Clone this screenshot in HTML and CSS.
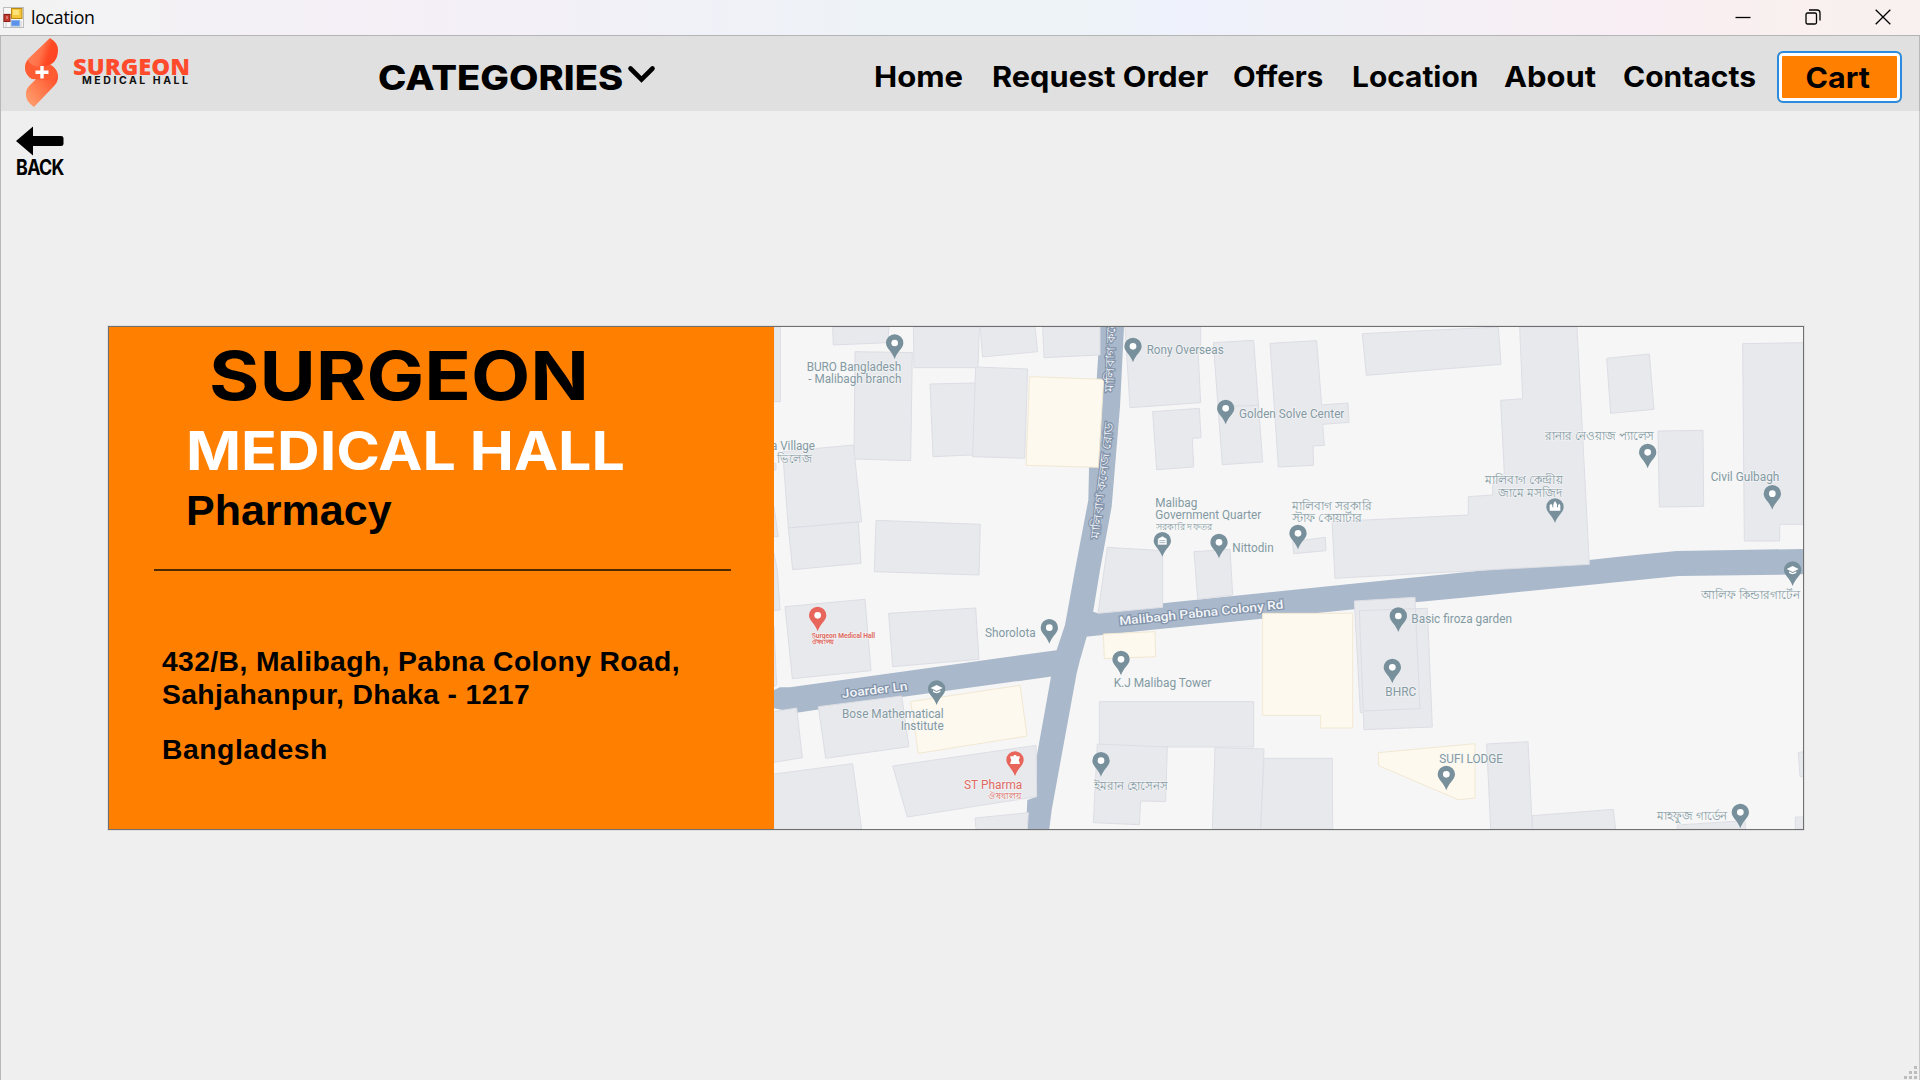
FILE: index.html
```html
<!DOCTYPE html>
<html lang="en">
<head>
<meta charset="utf-8">
<title>location</title>
<link rel="stylesheet" href="styles.css">
</head>
<body>
<div class="window">
  <div class="titlebar">
    <svg class="app-icon" width="21" height="21" viewBox="0 0 21 21">
      <rect x=".5" y=".5" width="20" height="20" fill="#f7f7f7" stroke="#bcbcbc"/>
      <path d="M.5 7H8M8 14.500V20M3 14V20M18 14V20" stroke="#ccc" fill="none"/>
      <rect x="8.500" y="1.500" width="10.500" height="10" fill="#f5c63c" stroke="#b98a12"/>
      <rect x="10" y="3" width="6" height="5" fill="#ffe27a"/>
      <rect x="1" y="7.500" width="6" height="7" fill="#c33a2c" stroke="#8e1f18"/>
      <path d="M4 9v3" stroke="#f3b0a8"/>
      <rect x="8.500" y="13.500" width="8" height="5.500" fill="#5b93ea" stroke="#8db0e6"/>
    </svg>
    <span class="title">location</span>
    <div class="controls">
      <svg width="16" height="16" viewBox="0 0 16 16"><path d="M.5 8.500h15"/></svg>
      <svg width="16" height="16" viewBox="0 0 16 16"><rect x="1" y="4" width="10.500" height="11" rx="1.500"/><path d="M4 1H12Q15 1 15 4V11.500"/></svg>
      <svg width="16" height="16" viewBox="0 0 16 16"><path d="M.7.700l14.600 14.600M15.300.700L.7 15.300"/></svg>
    </div>
  </div>

  <header class="header">
    <svg class="logo" width="170" height="75" viewBox="20 36 170 75">
      <defs>
        <linearGradient id="flameTop" x1="0" y1="0" x2="1" y2=".4"><stop offset="0" stop-color="#ff8e62"/><stop offset=".55" stop-color="#ff7048"/><stop offset=".75" stop-color="#ff4a24"/><stop offset="1" stop-color="#ff4422"/></linearGradient>
        <linearGradient id="flameLow" x1="0" y1="1" x2="1" y2="0"><stop offset="0" stop-color="#ffa574"/><stop offset=".5" stop-color="#ff7448"/><stop offset="1" stop-color="#ff3c1c"/></linearGradient>
      </defs>
      <path d="M50 38Q58 43 58 50Q58 57 54 62L50 65L32 79Q25 75 25 67Q25 62 29 58Z" fill="url(#flameTop)"/>
      <path d="M51 65Q58 70 58 77Q58 82 54 86L34 107Q25 101 26 93Q26 89 30 85L40 75Z" fill="url(#flameLow)"/>
      <path d="M28 60Q30 66 40 67L50 65Q57 68 58 76Q53 82 45 80L32 79Q25 75 25 67Q25 63 28 60Z" fill="#ff5c34"/>
      <path d="M42 66v12.500M35.500 72.200h13" stroke="#fff" stroke-width="3.400"/>
      <text class="logo-name" x="73" y="75" textLength="117" lengthAdjust="spacingAndGlyphs">SURGEON</text>
      <text class="logo-sub" x="82" y="84" textLength="106">MEDICAL HALL</text>
    </svg>
    <div class="categories"><span>CATEGORIES</span>
      <svg width="30" height="20" viewBox="0 0 30 20"><path d="M3.500 3.500L14.500 14.500L25.500 3.500"/></svg>
    </div>
    <nav class="nav">
      <a class="home">Home</a><a class="request">Request Order</a><a class="offers">Offers</a><a class="place">Location</a><a class="about">About</a><a class="contacts">Contacts</a>
    </nav>
    <button class="cart"><span>Cart</span></button>
  </header>

  <main class="main">
    <a class="back">
      <svg width="48" height="30" viewBox="0 0 48 30"><path d="M0 15L17 0.500V10H45Q47.500 10 47.500 12V18Q47.500 20 45 20H17V29.500Z"/></svg>
      <span>BACK</span>
    </a>
    <section class="card">
      <div class="info">
        <h1><span>SURGEON</span></h1>
        <h2><span>MEDICAL HALL</span></h2>
        <h3>Pharmacy</h3>
        <hr>
        <p class="street">432/B, Malibagh, Pabna Colony Road,<br>Sahjahanpur, Dhaka - 1217</p>
        <p class="country">Bangladesh</p>
      </div>
      <svg class="map" viewBox="12 21 3087 1506" preserveAspectRatio="none">
        <defs>
          <path id="drop" d="M0-26A26 26 0 0 1 26 0C26 16 7 26 0 48C-7 26-26 16-26 0A26 26 0 0 1 0-26Z"/>
          <g id="pin"><use href="#drop"/><circle r="10" fill="#fff"/></g>
          <g id="school"><use href="#drop"/><path d="M-18-3L0-12L18-3L0 6ZM-11 4L0 9L11 4V9Q0 16-11 9Z" fill="#fff"/></g>
        </defs>
        <rect x="12" y="21" width="3087" height="1506" fill="#f6f6f6"/>
        <g class="road">
          <path d="M990 21L980 180L957 445L955 540L915 750L885 915L860 990L843 1070L800 1310V1430L772 1440L768 1527H838L845 1470L920 1060L930 1020L950 950L970 872L990 750L1025 560L1050 260L1062 21Z"/>
          <path d="M960 872L984 880L1178 850L1740 792L2070 758L2458 720Q2600 704 2720 693L3099 687V763L2725 768L2070 834L1935 847L1753 868L1140 930L940 951Z"/>
          <path d="M12 1110L30 1102L60 1102L395 1055L870 989L850 1069L400 1130L80 1178L12 1165Z"/>
        </g>
        <g class="building">
          <path d="M12 21H31V245H12Z"/>
          <path d="M188 21H357L353 68L190 75Z"/>
          <path d="M255 95L427 98L422 422L252 417Z"/>
          <path d="M430 21H628L624 143H432Z"/>
          <path d="M630 21H795L803 95L638 111Z"/>
          <path d="M818 21H990V105L822 113Z"/>
          <path d="M480 192L615 189L627 404L489 410Z"/>
          <path d="M617 141L773 147L764 415L608 410Z"/>
          <path d="M38 395L250 375L275 605L55 624Z"/>
          <path d="M55 624L265 606L273 730L68 749Z"/>
          <path d="M12 430H18V450H12ZM12 560L25 650H12ZM12 700L22 750L30 870L12 872ZM12 920L20 1095L12 1100Z"/>
          <path d="M318 601L631 613L627 765L313 755Z"/>
          <path d="M1065 21H1292V75L1284 90L1292 248L1080 263Z"/>
          <path d="M1148 275L1288 265L1293 353L1267 355L1271 441L1160 449Z"/>
          <path d="M1330 68L1451 61L1478 426L1357 434ZM1345 260L1465 256"/>
          <path d="M1500 70L1640 62L1655 255L1734 249L1737 307L1658 313L1663 376L1629 378L1631 436L1525 441Z"/>
          <path d="M1777 41L2185 21L2193 133L1789 166Z"/>
          <path d="M1568 665L1666 652L1668 692L1571 701Z"/>
          <path d="M1272 695L1380 688L1388 825L1283 838Z"/>
          <path d="M1012 682L1178 692V862L984 880Z"/>
          <path d="M2249 21H2421L2458 733L1695 775L1686 605L2095 585V530L2168 525V490L2203 460L2192 241L2258 236Z"/>
          <path d="M2510 115L2638 102L2652 268L2522 280Z"/>
          <path d="M2664 333L2799 331L2801 559L2668 561Z"/>
          <path d="M2918 71L3100 68V613H3029V663H2923Z"/>
          <path d="M45 860L285 838L303 1052L67 1076Z"/>
          <path d="M356 880L617 864L627 1018L368 1040Z"/>
          <path d="M12 1175L80 1164L97 1313L12 1327Z"/>
          <path d="M145 1160L395 1128L417 1280L167 1315Z"/>
          <path d="M12 1362L248 1331L275 1527H12Z"/>
          <path d="M368 1338L798 1276L800 1430L412 1491Z"/>
          <path d="M615 1494L775 1478L772 1527H618Z"/>
          <path d="M988 1145H1451V1281H988Z"/>
          <path d="M982 1272L1192 1281L1187 1445L1112 1443L1108 1514L970 1508Z"/>
          <path d="M1335 1283L1482 1287L1472 1527H1327Z"/>
          <path d="M1482 1315H1687L1688 1527H1472Z"/>
          <path d="M1753 843L1935 832L1936 866L1972 865L1987 1221L1782 1229L1780 1178H1771Z"/>
          <path d="M1768 872L1936 866L1950 1166L1780 1173Z"/>
          <path d="M2150 1272L2274 1265L2287 1527H2162Z"/>
          <path d="M2287 1487L2530 1468L2537 1527H2288Z"/>
          <path d="M2722 1515L2925 1502L2927 1527H2722Z"/>
          <path d="M3085 1298L3100 1295V1370H3090ZM3076 1491H3100V1527H3076Z"/>
        </g>
        <g class="yard">
          <path d="M779 170L1001 178L985 442L768 436Z"/>
          <path d="M422 1145L750 1096L771 1248L445 1300Z"/>
          <path d="M1000 942L1155 935L1157 1010L1003 1016Z"/>
          <path d="M1478 880H1748V1224H1652V1186H1478Z"/>
          <path d="M1825 1298L2115 1271V1434L2065 1439L1826 1337Z"/>
        </g>
        <g class="street-name">
          <text transform="translate(217 1134) rotate(-7)" textLength="198" lengthAdjust="spacingAndGlyphs">Joarder Ln</text>
          <text transform="translate(1049 916) rotate(-5.900)" textLength="495" lengthAdjust="spacingAndGlyphs">Malibagh Pabna Colony Rd</text>
          <text transform="translate(987 658) rotate(-83)" textLength="352" lengthAdjust="spacingAndGlyphs">মালিবাগ কলেজ রোড</text>
          <text transform="translate(1030 217) rotate(-88)" textLength="352" lengthAdjust="spacingAndGlyphs">মালিবাগ কলেজ রোড</text>
        </g>
        <g class="pins">
          <use href="#pin" x="374" y="69"/><use href="#pin" x="1089" y="79"/><use href="#pin" x="1367" y="265"/>
          <use href="#pin" x="1347" y="667"/><use href="#pin" x="1584" y="640"/><use href="#pin" x="2633" y="397"/>
          <use href="#pin" x="3007" y="521"/><use href="#pin" x="838" y="923"/><use href="#pin" x="1053" y="1018"/>
          <use href="#pin" x="993" y="1322"/><use href="#pin" x="1885" y="888"/><use href="#pin" x="1867" y="1042"/>
          <use href="#pin" x="2029" y="1363"/><use href="#pin" x="2911" y="1477"/>
          <use href="#school" x="500" y="1107"/><use href="#school" x="3068" y="750"/>
          <use href="#drop" x="1177" y="662"/>
          <path d="M1163 656L1177 648L1191 656V675H1163ZM1168 662H1186M1168 668H1186" fill="#fff" stroke="#78909c" stroke-width="2"/>
          <use href="#drop" x="2355" y="561"/>
          <path d="M2339 572V556L2343 551L2347 556V562H2350V553L2355 543L2361 553V562H2364V556L2368 551L2371 556V572Z" fill="#fff"/>
        </g>
        <g class="pins medical">
          <use href="#pin" x="143" y="886"/>
          <use href="#drop" x="735" y="1320"/>
          <path d="M721 1309H731V1305H739V1309H749V1313L746 1320L749 1328V1332H721V1328L724 1320L721 1313Z" fill="#fff"/>
        </g>
        <g class="place-name">
          <text x="110" y="152" textLength="284" lengthAdjust="spacingAndGlyphs">BURO Bangladesh</text>
          <text x="115" y="188" textLength="279" lengthAdjust="spacingAndGlyphs">- Malibagh branch</text>
          <text x="3" y="389" textLength="132" lengthAdjust="spacingAndGlyphs">a Village</text>
          <text x="22" y="428" textLength="104" lengthAdjust="spacingAndGlyphs">ভিলেজ</text>
          <text x="1130" y="101" textLength="231" lengthAdjust="spacingAndGlyphs">Rony Overseas</text>
          <text x="1407" y="293" textLength="316" lengthAdjust="spacingAndGlyphs">Golden Solve Center</text>
          <text x="1156" y="560" textLength="126" lengthAdjust="spacingAndGlyphs">Malibag</text>
          <text x="1156" y="597" textLength="318" lengthAdjust="spacingAndGlyphs">Government Quarter</text>
          <text class="small" x="1157" y="629" textLength="171" lengthAdjust="spacingAndGlyphs">সরকারি দফতর</text>
          <text x="1387" y="696" textLength="124" lengthAdjust="spacingAndGlyphs">Nittodin</text>
          <text x="1565" y="570" textLength="240" lengthAdjust="spacingAndGlyphs">মালিবাগ সরকারি</text>
          <text x="1565" y="605" textLength="213" lengthAdjust="spacingAndGlyphs">স্টাফ কোয়ার্টার</text>
          <text x="2145" y="492" textLength="233" lengthAdjust="spacingAndGlyphs">মালিবাগ কেন্দ্রীয়</text>
          <text x="2183" y="531" textLength="192" lengthAdjust="spacingAndGlyphs">জামে মসজিদ</text>
          <text x="2325" y="361" textLength="328" lengthAdjust="spacingAndGlyphs">রানার নেওয়াজ প্যালেস</text>
          <text x="2822" y="484" textLength="206" lengthAdjust="spacingAndGlyphs">Civil Gulbagh</text>
          <text x="2793" y="838" textLength="297" lengthAdjust="spacingAndGlyphs">আলিফ কিন্ডারগার্টেন</text>
          <text x="645" y="950" textLength="152" lengthAdjust="spacingAndGlyphs">Shorolota</text>
          <text x="216" y="1195" textLength="305" lengthAdjust="spacingAndGlyphs">Bose Mathematical</text>
          <text x="392" y="1230" textLength="129" lengthAdjust="spacingAndGlyphs">Institute</text>
          <text x="1031" y="1102" textLength="293" lengthAdjust="spacingAndGlyphs">K.J Malibag Tower</text>
          <text x="972" y="1410" textLength="222" lengthAdjust="spacingAndGlyphs">ইমরান হোসেনস</text>
          <text x="1924" y="910" textLength="302" lengthAdjust="spacingAndGlyphs">Basic firoza garden</text>
          <text x="1846" y="1127" textLength="93" lengthAdjust="spacingAndGlyphs">BHRC</text>
          <text x="2008" y="1328" textLength="191" lengthAdjust="spacingAndGlyphs">SUFI LODGE</text>
          <text x="2662" y="1501" textLength="210" lengthAdjust="spacingAndGlyphs">মাহফুজ গার্ডেন</text>
        </g>
        <g class="place-name medical">
          <text x="582" y="1408" textLength="175" lengthAdjust="spacingAndGlyphs">ST Pharma</text>
          <text class="small" x="655" y="1436" textLength="100" lengthAdjust="spacingAndGlyphs">ঔষধালয়</text>
          <text class="tiny" x="125" y="955" textLength="190" lengthAdjust="spacingAndGlyphs">Surgeon Medical Hall</text>
          <text class="tiny" x="126" y="972" textLength="66" lengthAdjust="spacingAndGlyphs">ঔষধালয়</text>
        </g>
      </svg>
    </section>
    <svg class="grip" width="14" height="14" viewBox="0 0 14 14"><path d="M10 1h3v3h-3zM10 6h3v3h-3zM5 6h3v3H5zM10 11h3v3h-3zM5 11h3v3H5zM0 11h3v3H0z"/></svg>
  </main>
</div>
</body>
</html>
```
FILE: styles.css
```css
* { box-sizing: border-box; }
body { margin: 0; background: #efefef; color: #000; font-family: Inter, "Liberation Sans", sans-serif; }
.window { width: 1920px; height: 1080px; display: flex; flex-direction: column; overflow: hidden; }

.titlebar {
  height: 35px; flex: none; display: flex; align-items: center; padding: 0 12px 0 3px;
  background: linear-gradient(90deg, #f3f3f3 0, #f3f1f6 250px, #f5eff6 380px, #f1f1f8 680px, #edf3f7 900px, #edf3f7 1080px, #eef2fc 1170px, #f3f1f7 1400px, #f9eef3 1650px, #f9f0ef 1800px, #f8f1ef);
}
.app-icon { margin-top: -1px; }
.title { margin: -1px 0 0 7px; font: 17.700px "Open Sans", "Noto Sans", sans-serif; letter-spacing: -.25px; }
.controls { margin-left: auto; display: flex; gap: 54px; padding-right: 17px; margin-top: -2px; }
.controls svg { fill: none; stroke: #000; stroke-width: 1.300; }

.header {
  height: 76px; flex: none; display: flex; background: #e0e0e0; padding: 0 18px 0 20px;
  border-top: 1px solid #b4b4b4; box-shadow: inset 1px 0 #b8b8b8, inset -1px 0 #b8b8b8;
}
.logo { flex: none; }
.logo-name { font: 800 23px "Open Sans", sans-serif; fill: #ff4b2b; }
.logo-sub { font: 700 10.500px Inter, sans-serif; fill: #111; }
.categories {
  width: 300px; margin-left: 188px; display: flex; padding-top: 22px;
  font-size: 33.500px; line-height: 40px; font-weight: 800; white-space: nowrap;
}
.categories span { width: 243px; transform: scaleX(1.14); transform-origin: 0 50%; }
.categories svg { margin: 7px 0 0 6px; fill: none; stroke: #000; stroke-width: 4.600; stroke-linecap: round; }
.nav { display: flex; margin-left: 197px; padding-top: 21px; font-size: 29px; line-height: 40px; font-weight: 700; white-space: nowrap; }
.nav a { transform-origin: 0 50%; }
.home { width: 118px; transform: scaleX(1.07); }
.request { width: 241px; transform: scaleX(1.06); }
.offers { width: 119px; transform: scaleX(1.015); }
.place { width: 152px; transform: scaleX(1.03); }
.about { width: 119px; transform: scaleX(1.065); }
.contacts { width: 154px; transform: scaleX(1.035); }
.cart {
  flex: none; width: 125px; height: 52px; margin: 15px 0 0; padding: 0 4px 0 0; background: #ff8000;
  border: 2px solid #2b8bdc; border-radius: 6px; box-shadow: inset 0 0 0 3px #fff;
  font: 700 29px/44px Inter, sans-serif; color: #000;
}
.cart span { display: inline-block; transform: translateY(1px) scaleX(1.05); }

.main { flex: 1; position: relative; border-left: 1px solid #b8b8b8; border-right: 1px solid #c8c8c8; padding: 15px 0 0 15px; }
.back { display: flex; flex-direction: column; width: 49px; font-weight: 700; font-size: 21.500px; line-height: 20px; letter-spacing: -.8px; }
.back span { transform: translateY(1px) scaleX(.83); transform-origin: 0 50%; }
.card {
  width: 1696px; height: 504px; margin: 150px 0 0 92px; display: flex;
  border: 1px solid #6f6f6f; outline: 1px solid #e0e0e0; overflow: hidden;
}
.info { width: 665px; flex: none; background: #ff8000; padding: 9px 0 0 53px; }
.map { width: 1029px; height: 502px; flex: none; }
h1, h2, h3, p { margin: 0; white-space: nowrap; }
h1 { font-size: 67.500px; line-height: 80px; font-weight: 700; padding-left: 47px; }
h2 { font-size: 53px; line-height: 70px; font-weight: 700; padding-left: 24px; color: #fff; }
h1 span, h2 span { display: inline-block; transform-origin: 0 50%; }
h1 span { transform: scaleX(1.141); }
h2 span { transform: scaleX(1.115); }
h3 { font: 700 43px/48px "Liberation Sans", sans-serif; padding-left: 24px; }
hr { width: 577px; height: 2px; margin: 35px 0 74px -8px; border: 0; background: #4d2900; }
p { font: 700 28.300px/33px "Liberation Sans", sans-serif; letter-spacing: .38px; }
.country { margin-top: 22px; letter-spacing: .55px; }

.road { fill: #a9b8ca; }
.building { fill: #e8e9ed; stroke: #dddee5; stroke-width: 3; }
.yard { fill: #fdf9ee; stroke: #f2e8d2; stroke-width: 3; }
.pins { fill: #78909c; }
.pins.medical { fill: #e8655b; }
.place-name { font: 36px Roboto, "Noto Sans", sans-serif; fill: #839aa3; stroke: #f6f6f6; stroke-width: 5; stroke-opacity: .7; paint-order: stroke; }
.place-name.medical { fill: #df6a62; }
.place-name .small { font-size: 26px; }
.place-name .tiny { font-size: 19px; font-weight: 700; }
.street-name { font: 500 36px Roboto, "Noto Sans", sans-serif; fill: #f3f5f8; stroke: #8293aa; stroke-width: 7; paint-order: stroke; }
.grip { position: absolute; right: 1px; bottom: 1px; fill: #bcbcbc; }
```
